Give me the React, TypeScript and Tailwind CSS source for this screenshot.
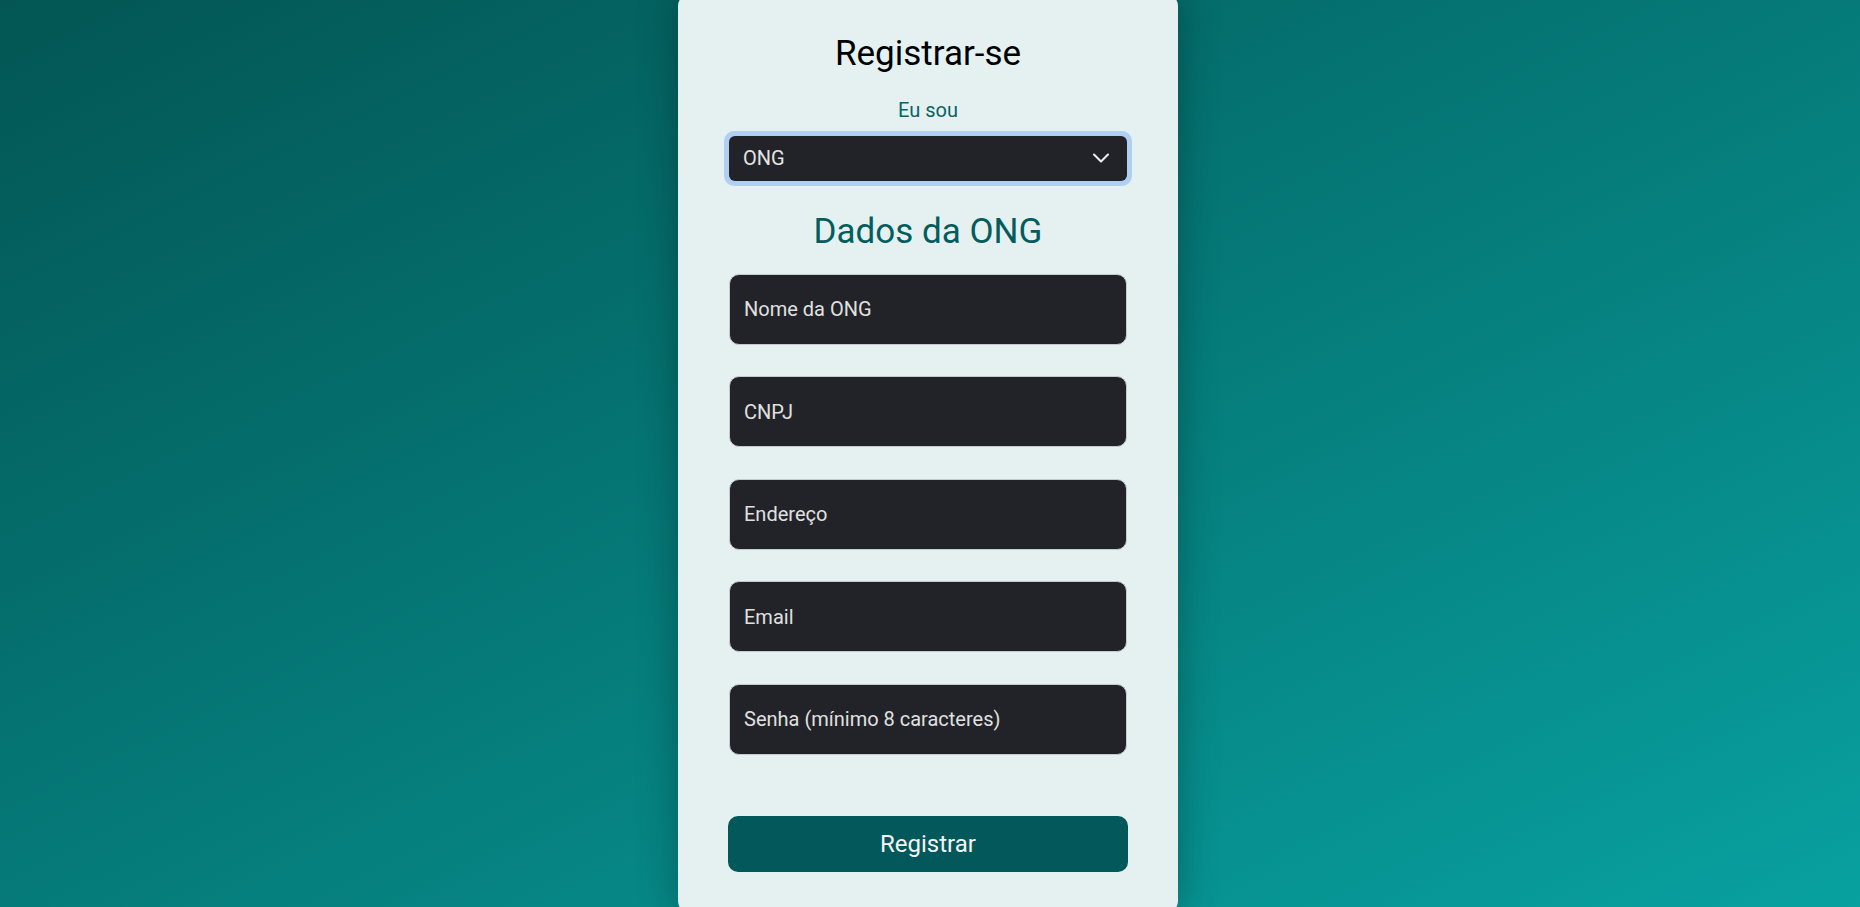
import React from 'react';
import { ChevronDown } from 'lucide-react';

const fields = ['Nome da ONG', 'CNPJ', 'Endereço', 'Email', 'Senha (mínimo 8 caracteres)'];

const App: React.FC = () => {
  return (
    <div
      className="h-screen overflow-hidden flex items-center justify-center pr-1 bg-linear-to-br from-[#035654] to-[#08a1a0]"
      style={{ fontFamily: 'Roboto, "Noto Sans", sans-serif' }}
    >
      {/* Card */}
      <div className="w-[500px] shrink-0 bg-[#e5f1f1] rounded-xl shadow-[0_0_40px_rgba(0,0,0,0.3)] flex flex-col items-center pt-[38.5px] pb-[41.5px]">
        <h1 className="text-[35px] leading-[42px] text-black">Registrar-se</h1>

        <label className="mt-[24.4px] text-[20px] leading-[23px] text-[#0b6262]">Eu sou</label>

        {/* Select with focus ring */}
        <div className="mt-[8.6px] p-[5px] rounded-[10px] bg-[#b0cff3]">
          <div className="w-[398px] h-[45px] rounded-md bg-[#212328] flex items-center justify-between pl-[14px] pr-[12px] text-[20px] text-[#e4e4e4]">
            <span>ONG</span>
            <ChevronDown className="w-7 h-7 text-[#ececec]" strokeWidth={1.8} />
          </div>
        </div>

        <h2 className="mt-[25px] text-[35px] leading-[42px] text-[#045c5c]">Dados da ONG</h2>

        {/* Inputs */}
        <div className="mt-[21px] flex flex-col gap-[31.5px]">
          {fields.map((f) => (
            <input
              key={f}
              type="text"
              placeholder={f}
              className="w-[398px] h-[71px] rounded-[10px] border border-[#c6c9cc] bg-[#212328] px-[14px] text-[20px] text-[#e4e4e4] placeholder:text-[#e0e0e0] outline-none"
            />
          ))}
        </div>

        <button className="mt-[61px] w-[400px] h-[56px] rounded-[10px] bg-[#02585a] text-[24px] text-[#f4f4f4]">
          Registrar
        </button>
      </div>
    </div>
  );
};

export default App;
